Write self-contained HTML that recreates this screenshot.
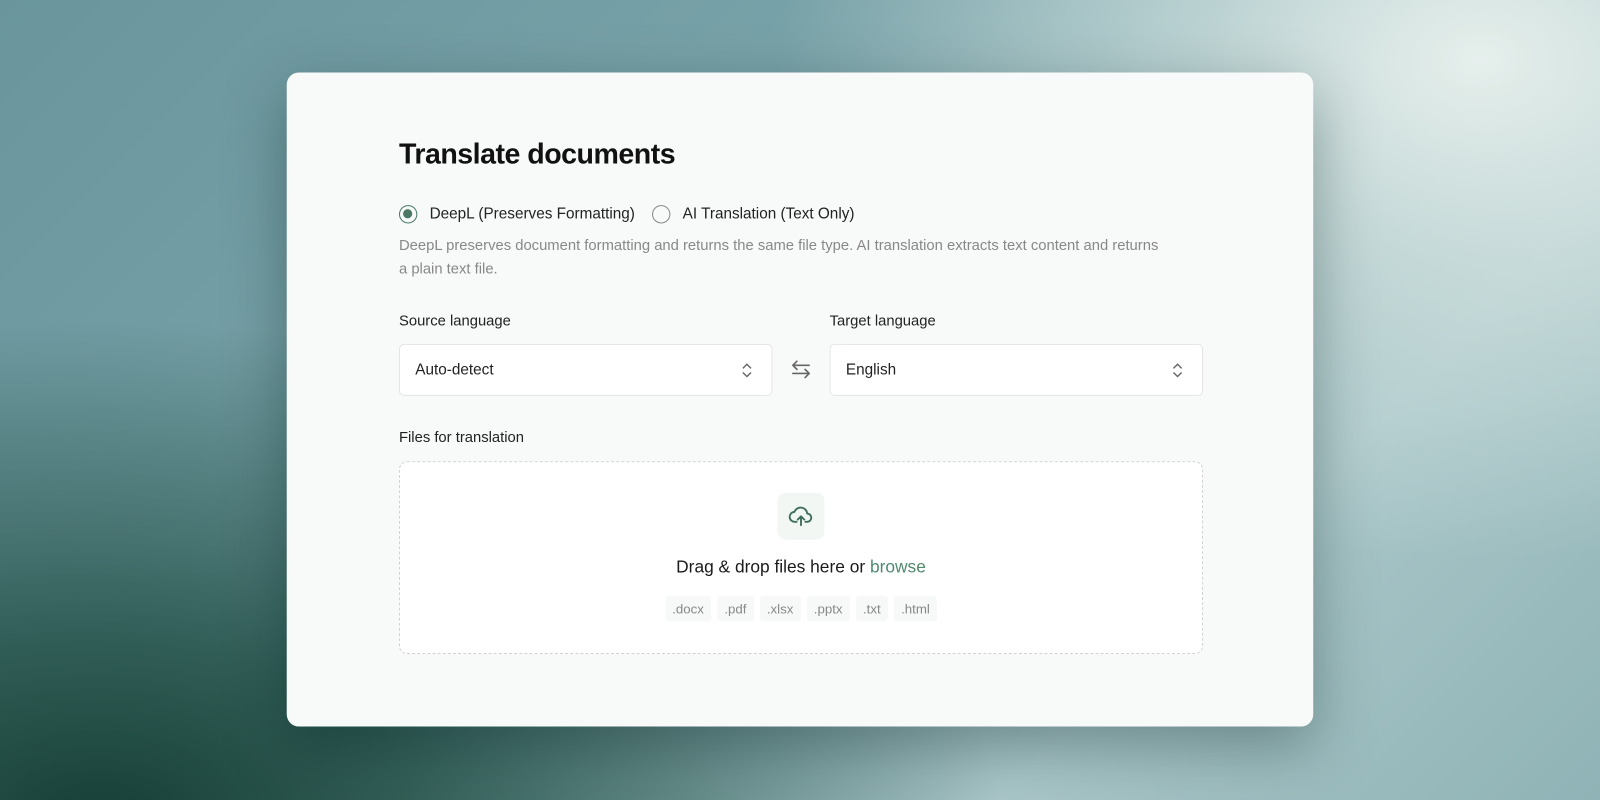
<!DOCTYPE html>
<html><head><style>
*{box-sizing:border-box;margin:0;padding:0}
body{width:1600px;height:800px;overflow:hidden;font-family:"Liberation Sans",sans-serif;position:relative;
background:
radial-gradient(ellipse 700px 500px at 1480px 60px,#e6efec 0%,rgba(220,233,230,0.6) 40%,rgba(200,220,220,0) 100%),
radial-gradient(ellipse 900px 500px at 100px 820px,#163f36 0%,rgba(30,75,65,0.8) 35%,rgba(60,110,110,0) 100%),
linear-gradient(135deg,#6a959d 0%,#7aa4aa 40%,#a9c6c8 75%,#8fb3b6 100%);}
.wrap{position:absolute;left:0;top:0;width:1568px;height:784px;transform:scale(1.0204);transform-origin:0 0}
.card{position:absolute;left:281px;top:71px;width:1006px;height:641px;background:#f8faf9;border-radius:12px;box-shadow:0 20px 60px rgba(0,30,30,0.35)}
.abs{position:absolute}
h1{position:absolute;left:110px;top:64px;font-size:28px;font-weight:bold;color:#111;letter-spacing:-0.5px}
.radio{position:absolute;top:130px;width:18px;height:18px;border-radius:50%;border:1.5px solid #888}
.rl{position:absolute;top:130px;font-size:15px;color:#222}
.desc{position:absolute;left:110px;top:159px;width:850px;font-size:14.5px;line-height:23px;color:#888;white-space:nowrap}
.lab{position:absolute;top:236px;font-size:14.5px;color:#222}
.sel{position:absolute;top:266px;width:366px;height:51px;background:#fff;border:1px solid #e3e6e5;border-radius:5px;font-size:15px;color:#222;padding:16px 15px}
.sel svg{position:absolute;right:18px;top:17px}
.drop{position:absolute;left:110px;top:381px;width:788px;height:189px;border:1.5px dashed #cfd4d3;border-radius:8px;background:#fff}
.chip{display:inline-block;background:#f6f9f7;color:#888;font-size:13px;padding:5px 7px;margin:0 3px;border-radius:3px}
</style></head><body>
<div class="wrap">
<div class="card">
<h1>Translate documents</h1>
<div class="radio" style="left:110px;border-color:#4a7a66"><div style="position:absolute;left:3px;top:3px;width:9px;height:9px;border-radius:50%;background:#4a7a66"></div></div>
<div class="rl" style="left:140px">DeepL (Preserves Formatting)</div>
<div class="radio" style="left:358px"></div>
<div class="rl" style="left:388px">AI Translation (Text Only)</div>
<div class="desc">DeepL preserves document formatting and returns the same file type. AI translation extracts text content and returns<br>a plain text file.</div>
<div class="lab" style="left:110px">Source language</div>
<div class="lab" style="left:532px">Target language</div>
<div class="sel" style="left:110px">Auto-detect<svg width="12" height="16" viewBox="0 0 12 16"><path d="M2 6l4-4 4 4M2 10l4 4 4-4" fill="none" stroke="#666" stroke-width="1.4"/></svg></div>
<div class="sel" style="left:532px">English<svg width="12" height="16" viewBox="0 0 12 16"><path d="M2 6l4-4 4 4M2 10l4 4 4-4" fill="none" stroke="#666" stroke-width="1.4"/></svg></div>
<svg class="abs" style="left:493px;top:280px" width="22" height="22" viewBox="0 0 22 22"><path d="M3 7h16M3 7l4-4M3 7l4 4M19 15H3M19 15l-4-4M19 15l-4 4" fill="none" stroke="#666" stroke-width="1.6" stroke-linecap="round" stroke-linejoin="round"/></svg>
<div class="lab" style="left:110px;top:350px">Files for translation</div>
<div class="drop">
<div class="abs" style="left:370px;top:30px;width:46px;height:46px;border-radius:8px;background:#f2f7f4"></div>
<svg class="abs" style="left:380px;top:40px" width="26" height="26" viewBox="0 0 24 24"><path d="M8 17H6.5a4.5 4.5 0 0 1-.5-9 6 6 0 0 1 11.6 1.5A3.5 3.5 0 0 1 17.5 17H16M12 20v-8M9 15l3-3 3 3" fill="none" stroke="#3f6e5c" stroke-width="1.7" stroke-linecap="round" stroke-linejoin="round"/></svg>
<div class="abs" style="left:0;width:100%;top:93px;text-align:center;font-size:17px;color:#1a1a1a">Drag &amp; drop files here or <span style="color:#4f8a6e">browse</span></div>
<div class="abs" style="left:0;width:100%;top:131px;text-align:center"><span class="chip">.docx</span><span class="chip">.pdf</span><span class="chip">.xlsx</span><span class="chip">.pptx</span><span class="chip">.txt</span><span class="chip">.html</span></div>
</div>
</div>
</div>
</body></html>
